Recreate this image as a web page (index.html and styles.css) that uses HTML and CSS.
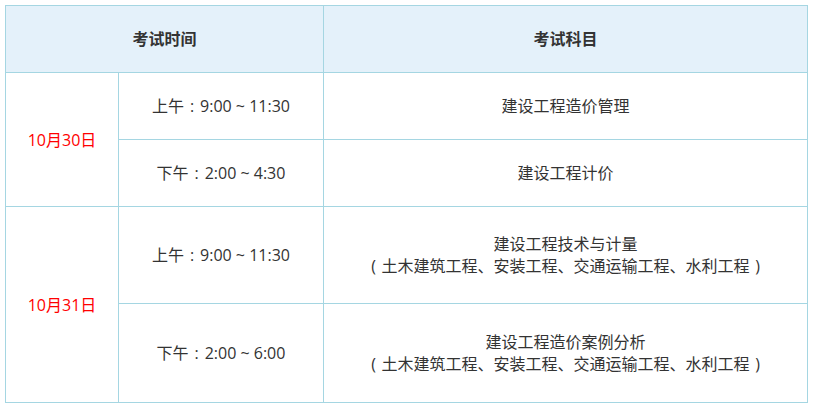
FILE: index.html
```html
<!DOCTYPE html>
<html lang="zh-CN">
<head>
<meta charset="utf-8">
<link rel="stylesheet" href="styles.css">
</head>
<body>
<table class="exam">
  <colgroup>
    <col class="c1"><col class="c2"><col class="c3">
  </colgroup>
  <thead>
    <tr class="head">
      <th colspan="2">考试时间</th>
      <th>考试科目</th>
    </tr>
  </thead>
  <tbody>
    <tr class="r1">
      <td rowspan="2" class="date">10月30日</td>
      <td>上午<span class="fw">:</span>9:00 ~ 11:30</td>
      <td>建设工程造价管理</td>
    </tr>
    <tr class="r2">
      <td>下午<span class="fw">:</span>2:00 ~ 4:30</td>
      <td>建设工程计价</td>
    </tr>
    <tr class="r3">
      <td rowspan="2" class="date">10月31日</td>
      <td>上午<span class="fw">:</span>9:00 ~ 11:30</td>
      <td>建设工程技术与计量<br><span class="fw">(</span>土木建筑工程、安装工程、交通运输工程、水利工程<span class="fw">)</span></td>
    </tr>
    <tr class="r4">
      <td>下午<span class="fw">:</span>2:00 ~ 6:00</td>
      <td>建设工程造价案例分析<br><span class="fw">(</span>土木建筑工程、安装工程、交通运输工程、水利工程<span class="fw">)</span></td>
    </tr>
  </tbody>
</table>
</body>
</html>
```
FILE: styles.css
```css
html, body {
  margin: 0;
  padding: 0;
  background: #ffffff;
}
body {
  padding: 5px;
  font-family: "Open Sans", "Noto Sans CJK SC", sans-serif;
  font-size: 16px;
  color: #333333;
}
.exam {
  border-collapse: collapse;
  table-layout: fixed;
  width: 802px;
}
.c1 { width: 113px; }
.c2 { width: 205px; }
.c3 { width: 484px; }
.exam th, .exam td {
  border: 1px solid #a5d6e2;
  text-align: center;
  vertical-align: middle;
  padding: 0;
  line-height: 22px;
}
.exam th {
  background: #e4f1fa;
  font-weight: bold;
  color: #333333;
}
.head { height: 67px; }
.r1 { height: 67px; }
.r2 { height: 67px; }
.r3 { height: 97px; }
.r4 { height: 99px; }
.date { color: #ff0000; }
.fw {
  display: inline-block;
  width: 1em;
  text-align: center;
}
```
